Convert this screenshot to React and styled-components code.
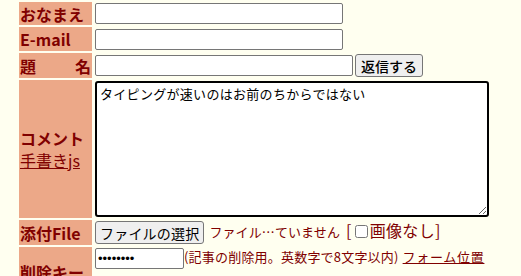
import React from 'react'
import styled, { createGlobalStyle } from 'styled-components'

const Global = createGlobalStyle`
  body {
    margin: 0;
    background: #fffff0;
    font-family: "Noto Sans CJK JP", "Noto Sans", sans-serif;
    color: #800000;
  }
`;

const Table = styled.table`
  margin-left: 17px;
  border-collapse: separate;
  border-spacing: 2px;
`;

const Label = styled.th`
  width: 71px;
  height: ${p => p.h || 23}px;
  padding: 0 1px;
  background: #eca888;
  color: #800000;
  font-size: 16px;
  font-weight: bold;
  text-align: ${p => (p.spread ? 'justify' : 'left')};
  text-align-last: ${p => (p.spread ? 'justify' : 'auto')};
  white-space: nowrap;
  line-height: 22px;
  vertical-align: middle;
`;

const Field = styled.td`
  padding: 0 0 0 1px;
  vertical-align: ${p => p.valign || 'middle'};
  white-space: nowrap;
  font-size: 14px;
  line-height: 18px;
`;

const Link = styled.a`
  color: #800000;
  font-weight: normal;
  font-size: 16px;
  text-decoration: underline;
  cursor: pointer;
`;

const TextInput = styled.input`
  box-sizing: border-box;
  width: ${p => p.w}px;
  height: 21px;
  margin: 0;
  padding: 1px 2px;
  border: 1px solid #767676;
  border-radius: 2px;
  background: #fff;
  font-size: 13px;
  vertical-align: middle;
`;

const Button = styled.button`
  box-sizing: border-box;
  height: 23px;
  margin: 0 0 0 2px;
  padding: 0 5px;
  border: 1px solid #767676;
  border-radius: 3px;
  background: #efefef;
  color: #000;
  font-family: "Noto Sans CJK JP", sans-serif;
  font-size: 14px;
  font-weight: 500;
  vertical-align: middle;
`;

const Comment = styled.textarea`
  box-sizing: border-box;
  display: block;
  width: 394px;
  height: 136px;
  margin: 0;
  padding: 2px 3px;
  border: 2px solid #000;
  border-radius: 3px;
  outline: none;
  background: #fff;
  color: #000;
  font-family: "Noto Sans CJK JP", sans-serif;
  font-size: 13px;
  letter-spacing: 0.3px;
  line-height: 17px;
  resize: both;
`;

const FileButton = styled(Button)`
  margin: 0;
  padding: 0 4px;
  font-weight: normal;
  letter-spacing: 0.2px;
`;

const Note = styled.span`
  margin-left: 5px;
  font-size: 13px;
  letter-spacing: 0.1px;
`;

const Bracket = styled.span`
  margin-left: 6px;
  font-size: 16px;
  letter-spacing: 0.3px;
`;

const Check = styled.input`
  width: 13px;
  height: 13px;
  margin: 0 2px 0 3px;
  vertical-align: -1px;
`;

const Small = styled.span`
  font-size: 13px;
  letter-spacing: 0.2px;
`;

const FormLink = styled.a`
  margin-left: 4px;
  color: #800000;
  font-size: 13px;
  letter-spacing: 0.7px;
  text-decoration: underline;
`;

export default function App() {
  return (
    <>
      <Global />
      <Table>
        <tbody>
          <tr>
            <Label>おなまえ</Label>
            <Field><TextInput w={248} /></Field>
          </tr>
          <tr>
            <Label h={24}>E-mail</Label>
            <Field><TextInput w={248} /></Field>
          </tr>
          <tr>
            <Label h={25} spread>題 名</Label>
            <Field>
              <TextInput w={258} />
              <Button>返信する</Button>
            </Field>
          </tr>
          <tr>
            <Label h={138}>
              コメント<br />
              <Link>手書きjs</Link>
            </Label>
            <Field>
              <Comment defaultValue="タイピングが速いのはお前のちからではない" />
            </Field>
          </tr>
          <tr>
            <Label h={25}>添付File</Label>
            <Field>
              <FileButton>ファイルの選択</FileButton>
              <Note>ファイル…ていません</Note>
              <Bracket>[<Check type="checkbox" />画像なし]</Bracket>
            </Field>
          </tr>
          <tr>
            <Label h={50}>削除キー</Label>
            <Field valign="top">
              <TextInput w={89} type="password" defaultValue="12345678" />
              <Small>(記事の削除用。英数字で8文字以内)</Small>
              <FormLink>フォーム位置</FormLink>
            </Field>
          </tr>
        </tbody>
      </Table>
    </>
  )
}
